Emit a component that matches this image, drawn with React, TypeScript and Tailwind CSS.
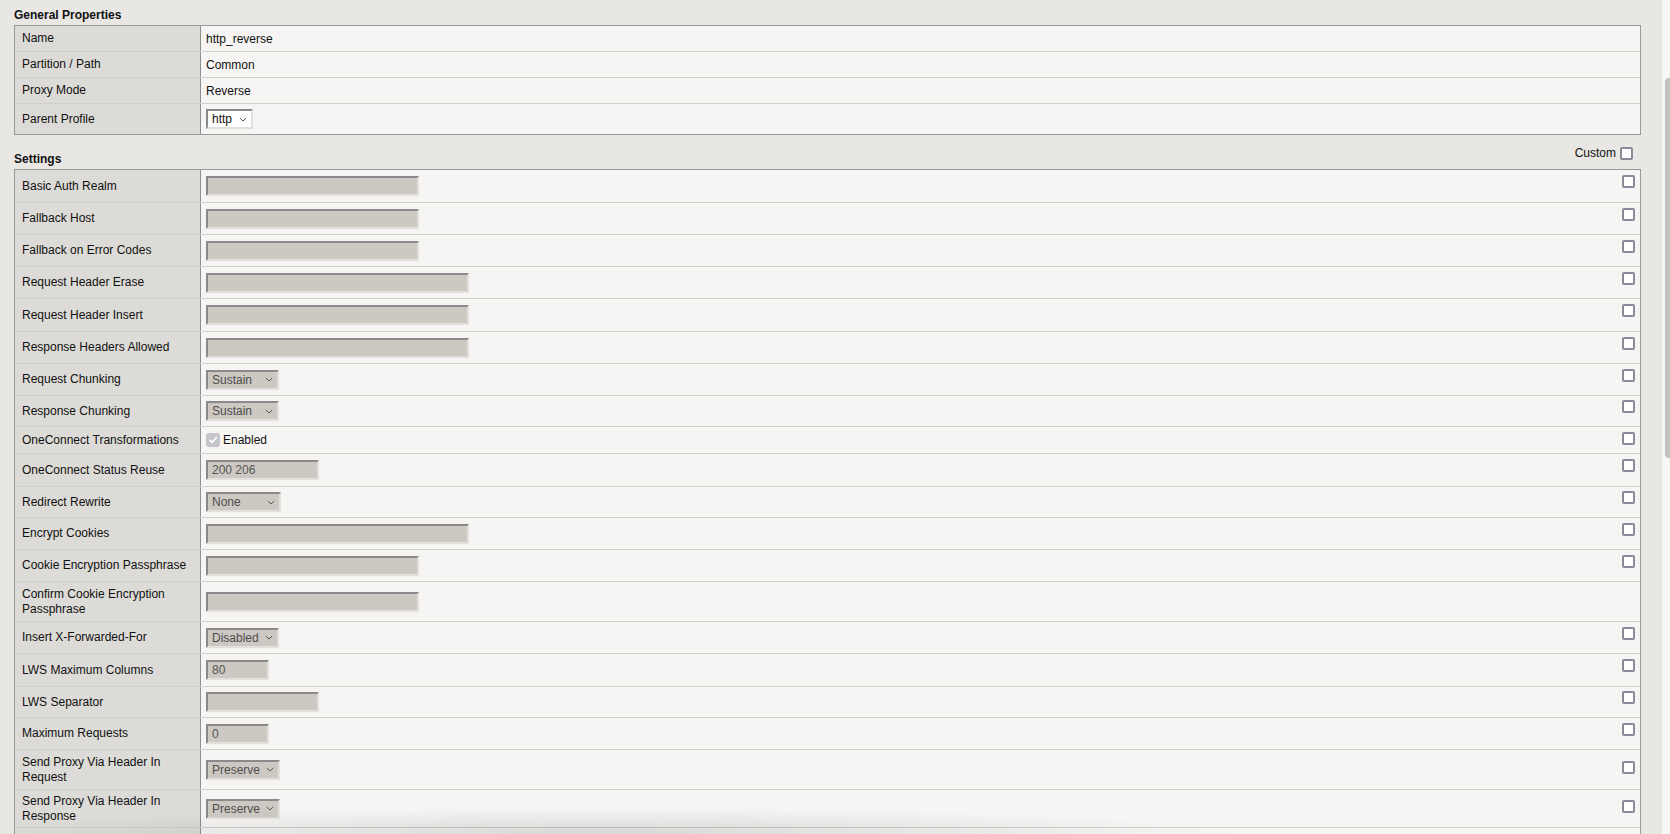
import type { ReactNode } from "react"

function Box() {
  return <div className="h-[13px] w-[13px] shrink-0 rounded-[2px] border-2 border-[#8b8a99] bg-white" />
}

function Field({ w, value }: { w: string; value?: string }) {
  return (
    <div
      className={`${w} flex h-[20px] items-center border-2 border-t-[#8a8a8a] border-l-[#8a8a8a] border-r-[#e1e0dd] border-b-[#e1e0dd] bg-[#cdc9c2] pl-[4px] text-[#555]`}
    >
      {value}
    </div>
  )
}

function Chevron() {
  return (
    <svg width="8" height="5" viewBox="0 0 8 5" className="shrink-0">
      <path d="M0.8 1 L4 4 L7.2 1" stroke="#555" strokeWidth="1" fill="none" />
    </svg>
  )
}

function Dropdown({ w, value }: { w: string; value: string }) {
  return (
    <div
      className={`${w} flex h-[20px] items-center justify-between border-2 border-t-[#8a8a8a] border-l-[#8a8a8a] border-r-[#e1e0dd] border-b-[#e1e0dd] bg-[#cdc9c2] pl-[4px] pr-[4px] text-[#4d4d4d]`}
    >
      <span>{value}</span>
      <Chevron />
    </div>
  )
}

interface RowProps {
  label: string
  h: string
  last?: boolean
  check?: boolean
  tall?: boolean
  children?: ReactNode
}

function Row({ label, h, last, check = true, tall, children }: RowProps) {
  return (
    <div className={`flex ${h} ${last ? "" : "border-b border-[#d0cfcc]"}`}>
      <div className="flex w-[186px] shrink-0 items-center border-r border-[#8e8e8e] bg-[#dcdbd7] px-[7px] leading-[15px] text-[#111]">
        {label}
      </div>
      <div className="flex flex-1 items-center justify-between bg-[#f6f5f3] pl-[5px] pr-[5px]">
        <div className="flex items-center">{children}</div>
        {check && (
          <div className={tall ? "mb-[4px]" : "mb-[9px]"}>
            <Box />
          </div>
        )}
      </div>
    </div>
  )
}

export default function App() {
  return (
    <div className="relative flex h-screen w-full overflow-hidden bg-[#e8e7e3] font-['Liberation_Sans',Arial,Helvetica,sans-serif] text-[12px] text-[#111]">
      <div className="flex-1 pl-[14px] pr-[21px]">
        {/* General Properties */}
        <div className="pt-[8px] pb-[2px] font-bold leading-[15px]">General Properties</div>
        <div className="border border-[#9a9a9a]">
          <Row label="Name" h="h-[26px]" check={false}>
            <span>http_reverse</span>
          </Row>
          <Row label="Partition / Path" h="h-[26px]" check={false}>
            <span>Common</span>
          </Row>
          <Row label="Proxy Mode" h="h-[26px]" check={false}>
            <span>Reverse</span>
          </Row>
          <Row label="Parent Profile" h="h-[30px]" check={false} last>
            <div className="flex h-[20px] w-[47px] items-center justify-between border-2 border-t-[#8a8a8a] border-l-[#8a8a8a] border-r-[#e1e0dd] border-b-[#e1e0dd] bg-white pl-[4px] pr-[4px] text-[#111]">
              <span>http</span>
              <Chevron />
            </div>
          </Row>
        </div>

        {/* Settings */}
        <div className="flex h-[34px] items-end justify-between">
          <div className="pb-[2px] font-bold leading-[15px]">Settings</div>
          <div className="flex items-center gap-[4px] pb-[8px] pr-[8px] leading-[15px]">
            <span>Custom</span>
            <Box />
          </div>
        </div>
        <div className="border border-b-0 border-[#9a9a9a]">
          <Row label="Basic Auth Realm" h="h-[33px]">
            <Field w="w-[213px]" />
          </Row>
          <Row label="Fallback Host" h="h-[32px]">
            <Field w="w-[213px]" />
          </Row>
          <Row label="Fallback on Error Codes" h="h-[32px]">
            <Field w="w-[213px]" />
          </Row>
          <Row label="Request Header Erase" h="h-[32px]">
            <Field w="w-[263px]" />
          </Row>
          <Row label="Request Header Insert" h="h-[33px]">
            <Field w="w-[263px]" />
          </Row>
          <Row label="Response Headers Allowed" h="h-[32px]">
            <Field w="w-[263px]" />
          </Row>
          <Row label="Request Chunking" h="h-[32px]">
            <Dropdown w="w-[73px]" value="Sustain" />
          </Row>
          <Row label="Response Chunking" h="h-[31px]">
            <Dropdown w="w-[73px]" value="Sustain" />
          </Row>
          <Row label="OneConnect Transformations" h="h-[27px]" tall>
            <div className="flex items-center gap-[3px]">
              <div className="flex h-[14px] w-[14px] items-center justify-center rounded-[3px] bg-[#c5c4ca]">
                <svg width="10" height="10" viewBox="0 0 10 10">
                  <path d="M1.8 5.2 L4 7.4 L8.4 2.6" stroke="#fff" strokeWidth="1.6" fill="none" strokeLinecap="round" strokeLinejoin="round" />
                </svg>
              </div>
              <span>Enabled</span>
            </div>
          </Row>
          <Row label="OneConnect Status Reuse" h="h-[33px]">
            <Field w="w-[113px]" value="200 206" />
          </Row>
          <Row label="Redirect Rewrite" h="h-[31px]">
            <Dropdown w="w-[75px]" value="None" />
          </Row>
          <Row label="Encrypt Cookies" h="h-[32px]">
            <Field w="w-[263px]" />
          </Row>
          <Row label="Cookie Encryption Passphrase" h="h-[32px]">
            <Field w="w-[213px]" />
          </Row>
          <Row label="Confirm Cookie Encryption Passphrase" h="h-[40px]" check={false}>
            <Field w="w-[213px]" />
          </Row>
          <Row label="Insert X-Forwarded-For" h="h-[32px]">
            <Dropdown w="w-[73px]" value="Disabled" />
          </Row>
          <Row label="LWS Maximum Columns" h="h-[33px]">
            <Field w="w-[63px]" value="80" />
          </Row>
          <Row label="LWS Separator" h="h-[31px]">
            <Field w="w-[113px]" />
          </Row>
          <Row label="Maximum Requests" h="h-[32px]">
            <Field w="w-[63px]" value="0" />
          </Row>
          <Row label="Send Proxy Via Header In Request" h="h-[40px]" tall>
            <Dropdown w="w-[74px]" value="Preserve" />
          </Row>
          <Row label="Send Proxy Via Header In Response" h="h-[38px]" tall>
            <Dropdown w="w-[74px]" value="Preserve" />
          </Row>
          <Row label="" h="h-[32px]" check={false} />
        </div>
      </div>

      {/* scrollbar */}
      <div className="w-[8px] shrink-0 bg-[#f7f7f7] pt-[78px]">
        <div className="ml-[3px] h-[380px] w-[5px] rounded-l-[4px] bg-[#c2c2c2]" />
      </div>

      {/* soft shadow at the bottom edge */}
      <div className="pointer-events-none absolute bottom-0 left-0 h-[30px] w-[1300px] bg-[radial-gradient(ellipse_640px_26px_at_600px_100%,rgba(0,0,0,0.12),transparent)]" />
    </div>
  )
}
